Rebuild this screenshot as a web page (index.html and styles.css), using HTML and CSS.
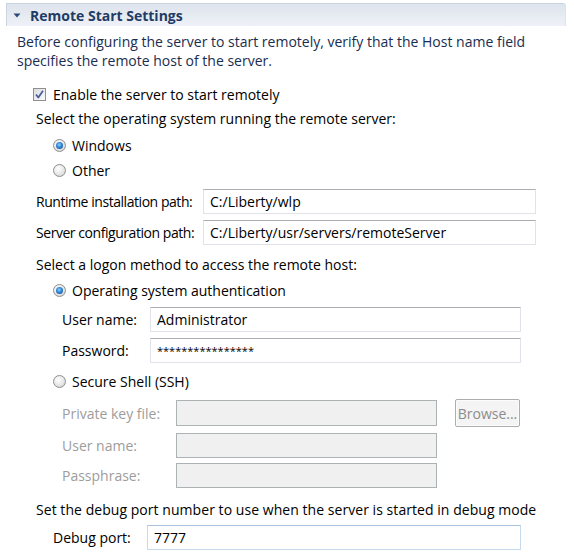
FILE: index.html
```html
<!DOCTYPE html>
<html>
<head>
<meta charset="utf-8">
<link rel="stylesheet" href="styles.css">
</head>
<body>
<div class="page">
  <div class="header">
    <svg class="twisty" width="8" height="5" viewBox="0 0 8 5"><path d="M0.5 0.5 H7.5 L4 4.5 Z" fill="#2b4a78"/></svg>
    <span class="title">Remote Start Settings</span>
  </div>
  <div class="desc">Before configuring the server to start remotely, verify that the Host name field specifies the remote host of the server.</div>

  <div class="row r-check">
    <span class="checkbox"><svg width="11" height="11" viewBox="0 0 11 11"><path d="M2 5.5 L4.3 8.5 L9 1.8" fill="none" stroke="#4a5e9c" stroke-width="1.8" stroke-linejoin="round"/></svg></span>
    <span class="lbl">Enable the server to start remotely</span>
  </div>
  <div class="row r-text r-os">Select the operating system running the remote server:</div>
  <div class="row r-radio r-win"><span class="radio on"></span><span class="lbl">Windows</span></div>
  <div class="row r-radio r-other"><span class="radio"></span><span class="lbl">Other</span></div>

  <div class="field f-path f-runtime"><span class="flabel">Runtime installation path:</span><span class="input">C:/Liberty/wlp</span></div>
  <div class="field f-path f-server"><span class="flabel">Server configuration path:</span><span class="input">C:/Liberty/usr/servers/remoteServer</span></div>

  <div class="row r-text r-logon">Select a logon method to access the remote host:</div>
  <div class="row r-radio r-osauth"><span class="radio on"></span><span class="lbl">Operating system authentication</span></div>
  <div class="field f-auth f-user"><span class="flabel">User name:</span><span class="input">Administrator</span></div>
  <div class="field f-auth f-pass"><span class="flabel">Password:</span><span class="input pw">****************</span></div>

  <div class="row r-radio r-ssh"><span class="radio"></span><span class="lbl">Secure Shell (SSH)</span></div>
  <div class="field f-ssh f-key"><span class="flabel">Private key file:</span><span class="input dis"></span><span class="btn">Browse...</span></div>
  <div class="field f-ssh f-suser"><span class="flabel">User name:</span><span class="input dis"></span></div>
  <div class="field f-ssh f-phrase"><span class="flabel">Passphrase:</span><span class="input dis"></span></div>

  <div class="row r-text r-debugtxt">Set the debug port number to use when the server is started in debug mode</div>
  <div class="field f-debug"><span class="flabel">Debug port:</span><span class="input focus">7777</span></div>
</div>
</body>
</html>
```
FILE: styles.css
```css
html, body {
  margin: 0;
  padding: 0;
  background: #ffffff;
}
.page {
  width: 574px;
  height: 557px;
  font-family: "Open Sans", "Noto Sans", sans-serif;
  font-size: 14px;
  color: #000;
  overflow: hidden;
}
.header {
  margin: 3px 8px 0 6px;
  height: 23px;
  box-sizing: border-box;
  border-top: 1px solid #c9d5e2;
  border-left: 1px solid #c9d5e2;
  border-right: 1px solid #dbe3ec;
  border-top-right-radius: 3px;
  background: linear-gradient(#dee4ec, #eef1f7);
  display: flex;
  align-items: center;
}
.twisty {
  margin-left: 6px;
  margin-right: 9px;
}
.title {
  font-weight: bold;
  color: #1f3b66;
  font-size: 14px;
}
.desc {
  margin: 6px 20px 0 17px;
  line-height: 19px;
  color: #1a2d50;
}
.row {
  height: 20px;
  display: flex;
  align-items: center;
  white-space: nowrap;
}
.r-check { margin-top: 14px; padding-left: 33px; }
.r-text { padding-left: 36px; }
.r-os { margin-top: 4px; }
.r-radio { padding-left: 53px; }
.r-win { margin-top: 7px; }
.r-other { margin-top: 5px; }
.r-logon { margin-top: 9px; }
.r-osauth { margin-top: 6px; }
.r-ssh { margin-top: 8px; }
.r-debugtxt { margin-top: 11px; letter-spacing: 0.05px; }

.checkbox {
  width: 13px;
  height: 13px;
  box-sizing: border-box;
  border: 1px solid #8f8f8f;
  background: linear-gradient(135deg, #dcdcdc, #fbfbfb);
  display: flex;
  align-items: center;
  justify-content: center;
  margin-right: 7px;
}
.radio {
  width: 13px;
  height: 13px;
  box-sizing: border-box;
  border-radius: 50%;
  border: 1px solid #8e8f8f;
  background: radial-gradient(circle at 40% 35%, #ffffff 0%, #e6e6e6 55%, #c9c9c9 100%);
  margin-right: 6px;
  position: relative;
}
.radio.on::after {
  content: "";
  position: absolute;
  left: 2px;
  top: 2px;
  width: 7px;
  height: 7px;
  border-radius: 50%;
  background: radial-gradient(circle at 45% 40%, #8fd0ff 0%, #2f86d6 45%, #0f3f86 100%);
}
.field {
  display: grid;
  align-items: center;
  white-space: nowrap;
}
.flabel {
  white-space: nowrap;
}
.f-path .flabel {
  letter-spacing: -0.45px;
}
.field .input {
  box-sizing: border-box;
  height: 25px;
  border: 1px solid #e2e3ea;
  border-top-color: #abadb3;
  background: #fff;
  padding-left: 6px;
  display: flex;
  align-items: center;
}
.f-path {
  padding-left: 36px;
  grid-template-columns: 167px 333px;
}
.f-runtime { margin-top: 9px; }
.f-server { margin-top: 6px; }
.f-auth {
  padding-left: 62px;
  grid-template-columns: 88px 371px;
}
.f-user { margin-top: 7px; }
.f-pass { margin-top: 6px; }
.pw { font-size: 11px; }
.f-ssh {
  padding-left: 62px;
  grid-template-columns: 114px 261px 18px 65px;
  color: #9d9d9d;
}
.f-ssh .input.dis {
  background: #f0f0f0;
  border: 1px solid #adb2b5;
  height: 26px;
}
.f-key { margin-top: 8px; height: 28px; }
.btn {
  grid-column: 4;
  box-sizing: border-box;
  height: 28px;
  border: 1px solid #adadad;
  border-radius: 2px;
  background: #f4f4f4;
  color: #8c8c8c;
  display: flex;
  align-items: center;
  justify-content: center;
  box-shadow: inset 0 0 0 1px #fcfcfc;
}
.f-suser { margin-top: 6px; }
.f-phrase { margin-top: 5px; }
.f-phrase .input.dis, .f-suser .input.dis { height: 25px; }
.f-debug {
  margin-top: 6px;
  padding-left: 53px;
  grid-template-columns: 94px 374px;
}
.f-debug .input.focus {
  border: 1px solid #c5daed;
  border-top-color: #a9c3dd;
}
```
